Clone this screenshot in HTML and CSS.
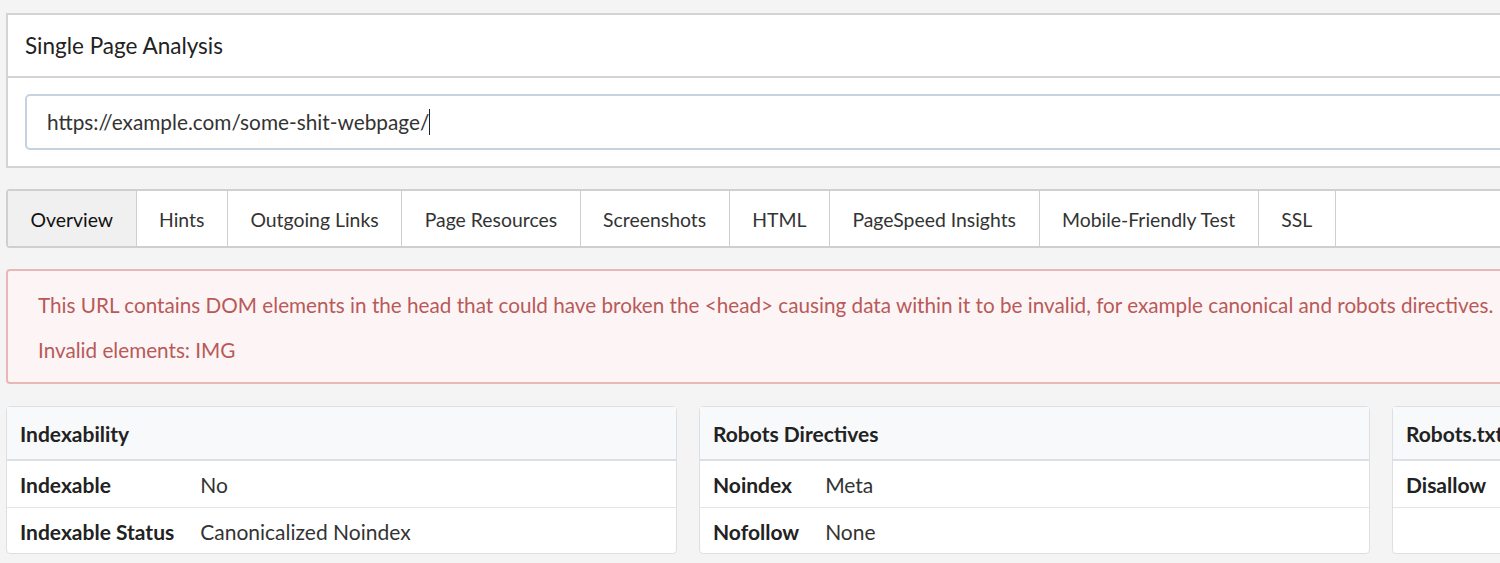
FILE: index.html
```html
<!DOCTYPE html>
<html lang="en">
<head>
    <meta charset="UTF-8">
    <meta name="viewport" content="width=device-width, initial-scale=1.0">
    <title>Single Page Analysis</title>
    <link rel="stylesheet" href="styles.css">
</head>
<body>
    <div class="page">
        <div class="panel">
            <div class="panel-heading">Single Page Analysis</div>
            <div class="panel-body">
                <div class="url-input">https://example.com/some-shit-webpage/<span class="caret"></span></div>
            </div>
        </div>

        <ul class="tabs">
            <li class="tab active">Overview</li>
            <li class="tab">Hints</li>
            <li class="tab">Outgoing Links</li>
            <li class="tab">Page Resources</li>
            <li class="tab">Screenshots</li>
            <li class="tab">HTML</li>
            <li class="tab">PageSpeed Insights</li>
            <li class="tab">Mobile-Friendly Test</li>
            <li class="tab">SSL</li>
        </ul>

        <div class="alert">
            <p>This URL contains DOM elements in the head that could have broken the &lt;head&gt; causing data within it to be invalid, for example canonical and robots directives.</p>
            <p>Invalid elements: IMG</p>
        </div>

        <div class="cards">
            <div class="card">
                <div class="card-header">Indexability</div>
                <table class="card-table">
                    <tr><th>Indexable</th><td>No</td></tr>
                    <tr><th>Indexable Status</th><td>Canonicalized Noindex</td></tr>
                </table>
            </div>
            <div class="card">
                <div class="card-header">Robots Directives</div>
                <table class="card-table">
                    <tr><th>Noindex</th><td>Meta</td></tr>
                    <tr><th>Nofollow</th><td>None</td></tr>
                </table>
            </div>
            <div class="card">
                <div class="card-header">Robots.txt</div>
                <table class="card-table">
                    <tr><th>Disallow</th><td></td></tr>
                    <tr><th></th><td></td></tr>
                </table>
            </div>
        </div>
    </div>
</body>
</html>
```

FILE: styles.css
```css
html, body {
    overflow: hidden;
}

body {
    font-family: Lato, "Open Sans", sans-serif;
    background-color: #f4f4f4;
    color: #222;
    margin: 0;
    padding: 13px 0 0 6px;
}

.page {
    width: 2057px;
}

.panel {
    background-color: #fff;
    border: 2px solid #d4d4d4;
}

.panel-heading {
    font-size: 22.5px;
    padding: 0 17px;
    height: 61px;
    line-height: 61px;
    border-bottom: 2px solid #d4d4d4;
}

.panel-body {
    padding: 16px 17px 16px 17px;
}

.url-input {
    height: 52px;
    line-height: 52px;
    border: 2px solid #c6d3df;
    border-radius: 5px;
    padding: 0 20px;
    font-size: 20.8px;
    color: #333;
}

.caret {
    display: inline-block;
    width: 1px;
    height: 26px;
    background-color: #222;
    vertical-align: -5px;
}

.tabs {
    display: flex;
    list-style: none;
    margin: 21px 0 0 0;
    padding: 0;
    background-color: #fff;
    border: 2px solid #cfcfcf;
    border-radius: 4px;
}

.tab {
    padding: 0 22.5px;
    height: 55px;
    line-height: 57px;
    font-size: 19.4px;
    color: #333;
    border-right: 1px solid #cfcfcf;
}

.tab.active {
    background-color: #f0f0f0;
    color: #111;
}

.alert {
    margin-top: 21px;
    background-color: #fdf5f5;
    border: 2px solid #e8b8b8;
    border-radius: 4px;
    padding: 12px 30px 9px 30px;
    color: #b85a5a;
    font-size: 20.7px;
}

.alert p {
    margin: 0;
    line-height: 45px;
}

.cards {
    display: flex;
    gap: 22px;
    margin-top: 22px;
}

.card {
    width: 671px;
    background-color: #fff;
    border: 1px solid #dcdfe3;
    border-radius: 4px;
    box-sizing: border-box;
}

.card-header {
    background-color: #f8f9fa;
    height: 52px;
    line-height: 54px;
    padding: 0 13px;
    font-size: 21px;
    font-weight: bold;
    white-space: nowrap;
    border-bottom: 2px solid #dcdfe3;
}

.card-table {
    width: 100%;
    border-collapse: collapse;
    font-size: 21px;
}

.card-table th,
.card-table td {
    height: 46px;
    padding: 2px 13px 0 13px;
    box-sizing: border-box;
    text-align: left;
    white-space: nowrap;
}

.card-table th {
    width: 1%;
    padding-right: 13px;
}

.card-table td {
    color: #333;
}

.card-table tr + tr th,
.card-table tr + tr td {
    border-top: 1px solid #e3e5e8;
}
```
